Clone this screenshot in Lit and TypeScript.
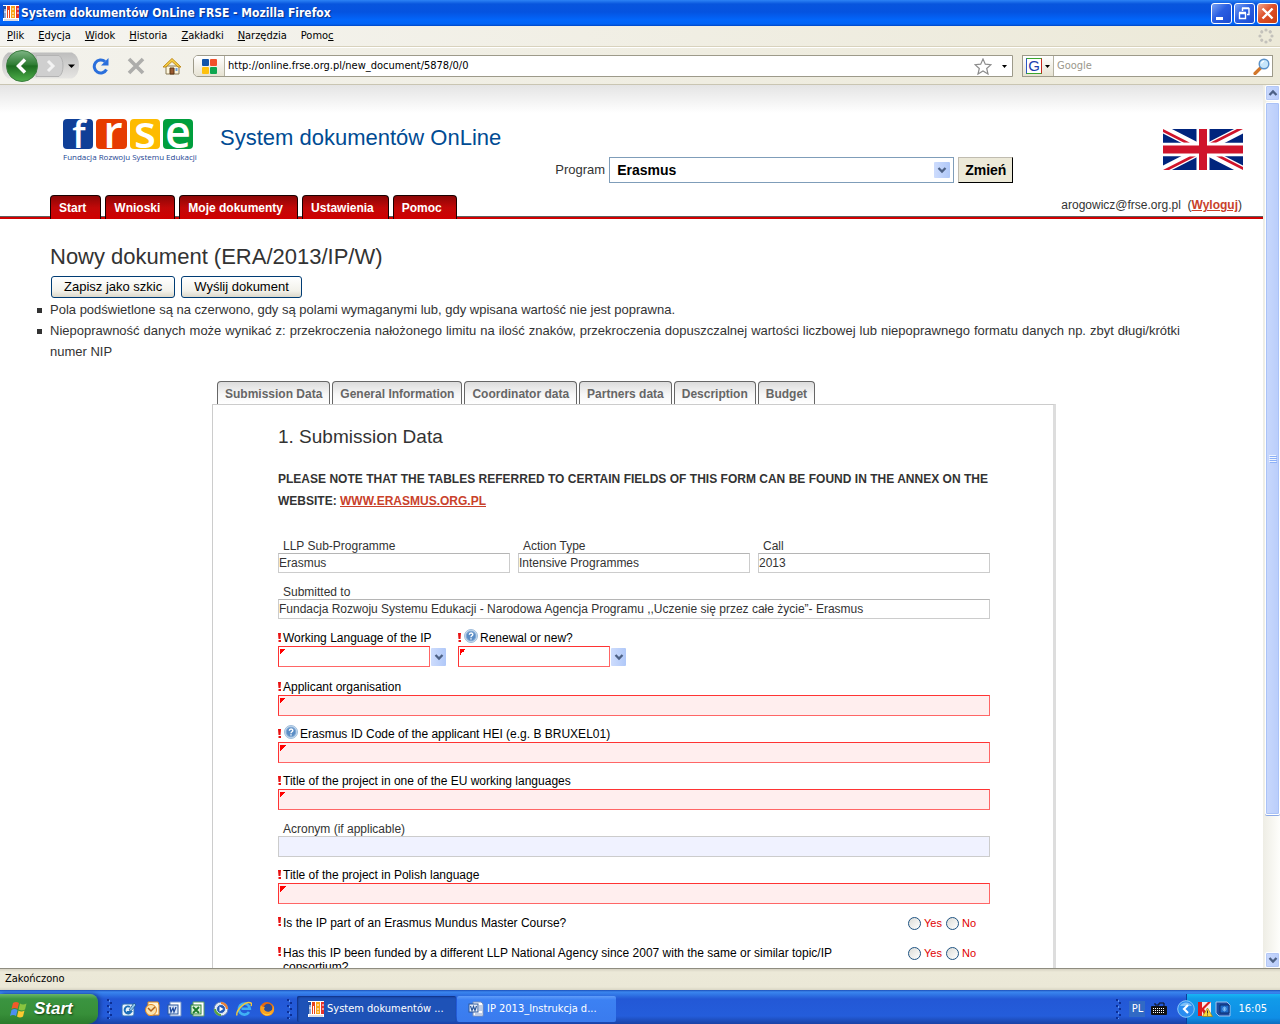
import { LitElement, html, svg, css, nothing } from "lit";
import { customElement, state } from "lit/decorators.js";
import { classMap } from "lit/directives/class-map.js";

interface Field {
  id: string;
  label: string;
  value?: string;
  kind: "readonly" | "required" | "optional";
  help?: boolean;
}

const menus: [string, string, string][] = [
  ["", "P", "lik"],
  ["", "E", "dycja"],
  ["", "W", "idok"],
  ["", "H", "istoria"],
  ["", "Z", "akładki"],
  ["", "N", "arzędzia"],
  ["Pomo", "c", ""],
];

const navItems = ["Start", "Wnioski", "Moje dokumenty", "Ustawienia", "Pomoc"];

const tabs = [
  "Submission Data",
  "General Information",
  "Coordinator data",
  "Partners data",
  "Description",
  "Budget",
];

const programmeFields: Field[] = [
  { id: "sub", label: "LLP Sub-Programme", value: "Erasmus", kind: "readonly" },
  { id: "action", label: "Action Type", value: "Intensive Programmes", kind: "readonly" },
  { id: "call", label: "Call", value: "2013", kind: "readonly" },
];

const submittedTo: Field = {
  id: "submitted",
  label: "Submitted to",
  value: "Fundacja Rozwoju Systemu Edukacji - Narodowa Agencja Programu ,,Uczenie się przez całe życie”- Erasmus",
  kind: "readonly",
};

const selects: Field[] = [
  { id: "lang", label: "Working Language of the IP", kind: "required" },
  { id: "renewal", label: "Renewal or new?", kind: "required", help: true },
];

const textFields: Field[] = [
  { id: "org", label: "Applicant organisation", kind: "required" },
  { id: "erasmus-id", label: "Erasmus ID Code of the applicant HEI (e.g. B BRUXEL01)", kind: "required", help: true },
  { id: "title-eu", label: "Title of the project in one of the EU working languages", kind: "required" },
  { id: "acronym", label: "Acronym (if applicable)", kind: "optional" },
  { id: "title-pl", label: "Title of the project in Polish language", kind: "required" },
];

const questions = [
  { id: "mundus", text: "Is the IP part of an Erasmus Mundus Master Course?" },
  {
    id: "funded",
    text: "Has this IP been funded by a different LLP National Agency since 2007 with the same or similar topic/IP consortium?",
  },
];

const chevron = (dir: "up" | "down") => html`<svg viewBox="0 0 14 14" width="14" height="14" aria-hidden="true">
  <path d=${dir === "down" ? "M3.5 5 7 8.5 10.500 5" : "M3.500 9 7 5.500 10.500 9"} fill="none" stroke="#4d6185" stroke-width="2.300" />
</svg>`;

const caret = html`<svg viewBox="0 0 5 3" width="5" height="3" aria-hidden="true"><path d="M0 0h5L2.500 3z" fill="#000" /></svg>`;

const grip = html`<svg viewBox="0 0 6 20" width="6" height="20" aria-hidden="true">
  <path d="M1 0v20" stroke="#0c2f95" stroke-width="2" stroke-dasharray="2 4" />
  <path d="M4 3v17" stroke="#0c2f95" stroke-width="2" stroke-dasharray="2 4" />
  <path d="M2.500 1v19" stroke="#5c93f2" stroke-width="1" stroke-dasharray="2 4" />
</svg>`;

const frseMini = html`<svg viewBox="0 0 16 16" width="16" height="16" aria-hidden="true">
  <rect width="16" height="16" fill="#fff" />
  <path d="M0 1h3v12H0z" fill="#1d4fa8" /><path d="M4 1h3v12H4z" fill="#e8431b" />
  <path d="M8 1h4v12H8z" fill="#f9a516" /><path d="M13 1h3v12h-3z" fill="#e7322a" />
  <path d="M2 4v9M1 7h2M5.500 5v8M9 4h2M9 8h2M9 11h2M14 4h2M14 8h2" stroke="#fff" stroke-width="1" />
  <path d="M1 15h14" stroke="#b9b9c9" stroke-width="1" />
</svg>`;

const wordDoc = html`<svg viewBox="0 0 16 16" width="16" height="16" aria-hidden="true">
  <path d="M5 1h8l2 2v12H5z" fill="#fff" stroke="#7790bd" />
  <path d="M11 5h3M11 7h3M11 9h3M7 13h7" stroke="#7d9ad0" />
  <rect x="1" y="3" width="9" height="8" fill="#e8effb" stroke="#2b579a" />
  <path d="m2.500 5 1.500 4.500L5.500 5.500 7 9.500 8.500 5" fill="none" stroke="#2b579a" stroke-width="1.200" />
</svg>`;

const quickLaunch = [
  svg`<rect x="1" y="3" width="12" height="12" rx="2" fill="#e9f3fb" stroke="#2d6fb5"/><path d="M9 6a3.500 3.500 0 1 0 1 5H6" fill="none" stroke="#1e6fb8" stroke-width="2"/><path d="m8 9 5-7 2 2-5 6z" fill="#8cc7ee" stroke="#134a86" stroke-width=".7"/>`,
  svg`<path d="M4 1h10l1 3v10H4z" fill="#fff4d8" stroke="#e08b1c"/><circle cx="7" cy="9" r="5.500" fill="#fbe3b0" stroke="#e1861b"/><path d="m4 7 3 3 4-4" fill="none" stroke="#b0621a" stroke-width="1.500"/>`,
  svg`<path d="M3 1h11v14H3z" fill="#fff" stroke="#6d8fca"/><rect x="1" y="4" width="10" height="9" fill="#d9e6fa" stroke="#2b579a"/><path d="m3 6 1 5 2-4 1 4 2-5" fill="none" stroke="#1f4a9c" stroke-width="1.300"/>`,
  svg`<path d="M3 1h11v14H3z" fill="#fff" stroke="#5c9c63"/><rect x="1" y="4" width="10" height="9" fill="#d8efd6" stroke="#2f8236"/><path d="m3 6 6 6M9 6l-6 6" stroke="#1d7a2a" stroke-width="1.800"/>`,
  svg`<circle cx="8" cy="8" r="7" fill="#e9edf5" stroke="#5b7bb4"/><path d="M8 1a7 7 0 0 1 7 7H8z" fill="#ee8134"/><path d="M1 8a7 7 0 0 0 7 7V8z" fill="#5aa63c"/><circle cx="8" cy="8" r="4.500" fill="#2359b5" stroke="#dfe8f7"/><path d="M6.500 5.500v5L10.500 8z" fill="#fff"/>`,
  svg`<path d="M13 11a5.500 5.500 0 1 1 .8-3.200H5.500" fill="none" stroke="#3fb0f5" stroke-width="2.600"/><path d="M1 14.500C-.500 10 9-.500 15 2c1 .8.500 2 0 3" fill="none" stroke="#f3c93b" stroke-width="1.400"/>`,
  svg`<circle cx="8" cy="8" r="7" fill="#e66a10"/><circle cx="9" cy="7" r="4.300" fill="#2b4d9b"/><path d="M2 4c1 2 3 2 4 2l-1 2c1 3 5 4 8 1 1-2 1-4 0-6 3 3 3 8-1 11-4 2-9 0-10.500-4C1 8 1 6 2 4z" fill="#f9a11f"/><path d="M3 11c3 3 7 3 10 0-2 4-8 5-10 0z" fill="#fbd04b"/>`,
];

@customElement("app-root")
export class AppRoot extends LitElement {
  @state() private answers: Record<string, string> = {};

  static styles = css`
    :host {
      display: flex;
      flex-direction: column;
      height: 100vh;
      overflow: hidden;
      background: #fff;
      color: #333;
      font: 12px/14px "Liberation Sans", Arial, sans-serif;
    }
    * { box-sizing: border-box; }
    svg { display: block; flex: none; }
    button, input, select { font: inherit; color: inherit; margin: 0; border-radius: 0; outline: none; }
    button { padding: 0; border: 0; background: none; }
    h1, h2, p, ul { margin: 0; padding: 0; font-weight: normal; }
    ul { list-style: none; }

    .ui { font: 11px/14px "DejaVu Sans Condensed", Tahoma, sans-serif; color: #000; }

    /* window frame */
    .titlebar {
      flex: none;
      height: 26px;
      display: flex;
      align-items: center;
      gap: 2px;
      padding: 0 2px 0 3px;
      background: linear-gradient(#2d83f5 0, #0855dd 4px, #0553e0 12px, #0266fb 20px, #0264f5 24px, #0146c4 26px);
    }
    .titlebar-text {
      flex: 1;
      font: bold 12px/16px "DejaVu Sans Condensed", "Trebuchet MS", sans-serif;
      color: #fff;
      text-shadow: 1px 1px 1px #0a2f86;
    }
    .winbtn {
      width: 21px;
      height: 21px;
      border: 1px solid #fff;
      border-radius: 3px;
      background: linear-gradient(135deg, #7aa2f3, #2a5fe2 45%, #1c4bd0);
    }
    .winbtn.close { background: linear-gradient(135deg, #f0a58d, #de5029 45%, #c83d12); }
    .winbtn svg { margin: auto; }

    .menubar {
      flex: none;
      height: 22px;
      display: flex;
      align-items: center;
      justify-content: space-between;
      padding: 0 6px 2px 7px;
      background: linear-gradient(90deg, #f5f4f0, #ece9d8);
      border-bottom: 1px solid #fff;
      box-shadow: inset 0 -1px #d8d2bd;
    }
    .menus { display: flex; gap: 14px; }

    .toolbar {
      flex: none;
      height: 37px;
      display: flex;
      align-items: center;
      padding: 0 7px 0 2px;
      background: linear-gradient(90deg, #f3f2ec, #ece9d8);
      border-bottom: 1px solid #c9c5b2;
    }
    .history { margin-right: 12px; }
    .toolbtn { margin-right: 17px; }
    .urlbar, .search {
      height: 22px;
      display: flex;
      align-items: center;
      background: #fff;
      border: 1px solid #9d9a8a;
    }
    .urlbar { flex: 1; border-radius: 5px 0 0 5px; margin: 0 9px 0 -6px; padding-right: 5px; }
    .identity {
      width: 31px;
      height: 20px;
      display: flex;
      align-items: center;
      justify-content: center;
      background: linear-gradient(#fff, #e6e2d2);
      border-right: 1px solid #b5b2a2;
      border-radius: 4px 0 0 4px;
    }
    .url-input { flex: 1; min-width: 0; border: 0; padding: 0 3px; background: none; }
    .url-input::placeholder { color: #9a978c; opacity: 1; }
    .star { margin-right: 10px; }
    .search { width: 251px; padding-right: 2px; }
    .engine {
      width: 31px;
      height: 20px;
      display: flex;
      align-items: center;
      gap: 3px;
      padding-left: 3px;
      background: linear-gradient(#fff, #e6e2d2);
      border-right: 1px solid #b5b2a2;
    }
    .engine-mark {
      width: 16px;
      height: 16px;
      border: 1px solid #2a56c6;
      border-top-color: #3aa52f;
      border-bottom-color: #3aa52f;
      border-right-color: #c5281c;
      background: #fff;
      font: 15px/14px "Liberation Sans", Arial, sans-serif;
      color: #1b3fae;
      text-align: center;
    }

    /* viewport and scrollbar */
    .viewport { flex: 1; min-height: 0; display: flex; }
    .page {
      flex: 1;
      min-width: 0;
      overflow: hidden;
      background: linear-gradient(#e4e4e4, #fff 28px);
    }
    .scrollbar {
      flex: none;
      width: 17px;
      display: flex;
      flex-direction: column;
      gap: 1px;
      padding: 0 0 0 1px;
      background: linear-gradient(90deg, #eeede5, #fefefb);
    }
    .scrollbtn, .thumb {
      width: 15px;
      margin-left: 1px;
      border: 1px solid #fff;
      border-radius: 2px;
      background: linear-gradient(90deg, #c9d8fc, #b9cdfb);
      box-shadow: inset 0 0 0 1px #b4c8f6;
      display: flex;
      align-items: center;
      justify-content: center;
    }
    .scrollbtn { height: 16px; }
    .track { flex: 1; }
    .thumb { height: 84%; box-shadow: inset 0 0 0 1px #aac2f7, 0 1px #8ca9e6; }

    /* page header */
    .header { display: flex; height: 98px; padding: 34px 20px 0 63px; }
    .brand { width: 131px; color: #1d4592; }
    .brand-caption { font: 8px/14px "Open Sans", sans-serif; white-space: nowrap; }
    .site-title { margin-left: 26px; font-size: 22px; line-height: 38px; color: #004b93; white-space: nowrap; }
    .program { align-self: flex-end; display: flex; align-items: center; margin-left: 54px; }
    .program-label { font-size: 13px; margin-right: 4px; }
    .select-wrap { position: relative; display: flex; align-items: center; }
    .program-select {
      width: 345px;
      height: 26px;
      padding: 0 24px 0 7px;
      appearance: none;
      border: 1px solid #7f9db9;
      background: #fff;
      color: #000;
      font-size: 14px;
      font-weight: bold;
    }
    .drop {
      width: 16px;
      height: 18px;
      display: flex;
      align-items: center;
      justify-content: center;
      border-radius: 1px;
      background: linear-gradient(90deg, #cddcfd, #b0c8f8);
      pointer-events: none;
    }
    .select-wrap .drop { position: absolute; right: 4px; height: 16px; }
    .change {
      height: 26px;
      margin-left: 4px;
      padding: 0 6px;
      border: 1px solid #000;
      border-top-color: #c0bcb0;
      border-left-color: #c0bcb0;
      background: #ece9d8;
      color: #000;
      font-size: 14px;
      font-weight: bold;
    }
    .flag { margin: 10px 0 0 auto; }

    .navrow {
      display: flex;
      justify-content: space-between;
      height: 24px;
      margin-top: 12px;
      padding: 0 21px 0 50px;
      background: linear-gradient(to top, #d00000 2px, #5f5f5f 2px, #5f5f5f 3px, transparent 3px);
    }
    .nav { display: flex; gap: 4px; }
    .nav-link {
      padding: 0 14px 0 8px;
      border: 1px solid #1a0000;
      border-bottom: 0;
      border-radius: 4px 4px 0 0;
      background: linear-gradient(#8c0606, #c20808 12px, #d00000);
      color: #fff;
      font-weight: bold;
      line-height: 24px;
      text-decoration: none;
    }
    .user { line-height: 20px; }
    .link { color: #c9412b; font-weight: bold; text-decoration: underline; }

    /* document intro */
    .intro { padding: 23px 83px 0 50px; }
    .doc-title { font-size: 22px; line-height: 30px; }
    .actions { display: flex; gap: 6px; padding: 4px 0 0 1px; }
    .action {
      height: 22px;
      padding: 0 12px;
      border: 1px solid #003c74;
      border-radius: 3px;
      background: linear-gradient(#fff, #f2f1ea 70%, #dcd8ca);
      color: #000;
      font-size: 13px;
    }
    .hints { margin: 1px 0 0 -13px; font-size: 13px; line-height: 21px; }
    .hint { display: grid; grid-template-columns: 13px 1fr; text-align: justify; }
    .hint::before { content: ""; width: 5px; height: 5px; margin-top: 9px; background: #333; }

    /* form */
    .form { padding: 19px 207px 0 212px; }
    .tabs { display: flex; gap: 2px; padding-left: 5px; }
    .tab {
      height: 23px;
      padding: 1px 7px 0 7px;
      border: 1px solid #666;
      border-bottom: 0;
      border-radius: 4px 4px 0 0;
      background: linear-gradient(#dcdcdc, #f6f6f6 12px, #fff);
      color: #666;
      font-weight: bold;
      white-space: nowrap;
    }
    .panel {
      display: flex;
      flex-direction: column;
      gap: 12px;
      padding: 20px 63px 40px 65px;
      border: 1px solid #ccc;
      border-right: 3px solid #ddd;
    }
    .panel-title { font-size: 19px; line-height: 24px; }
    .notice {
      margin: 7px 0 15px;
      padding-right: 2px;
      font-weight: bold;
      line-height: 22px;
      text-align: justify;
      text-transform: uppercase;
    }
    .columns { display: grid; grid-template-columns: repeat(3, 1fr); gap: 8px; }
    .picks { display: flex; gap: 12px; padding: 1px 0 2px; }
    .pick { width: 168px; }
    .label { display: flex; height: 14px; padding-left: 5px; white-space: nowrap; }
    .label.required { padding-left: 0; color: #000; line-height: 12px; }
    .bang { flex: none; width: 5px; }
    .help { margin: -3px 2px 0 1px; }
    .input {
      display: block;
      width: 100%;
      height: 21px;
      padding: 0;
      border: 1px solid #ccc;
      background: #fff;
    }
    .input.readonly { height: 20px; border-top-color: #b5b5b5; }
    .input.optional { background: #f0f2ff; }
    .input.required {
      border-color: #ff3333 #ff6666 #ff6666 #ff3333;
      background: linear-gradient(135deg, #f00 50%, transparent 50%) 1px 2px / 6px 6px no-repeat #ffeeee;
    }
    .pick-row { display: flex; align-items: center; gap: 1px; }
    .pick-row .input { flex: 1; width: auto; min-width: 0; appearance: none; background-color: #fff; }
    .pick-row .drop { width: 15px; }

    .question { display: flex; justify-content: space-between; min-height: 18px; padding-right: 14px; color: #000; }
    .question-text { display: flex; max-width: 580px; }
    .answers { display: flex; gap: 4px; height: 14px; align-items: center; font-size: 11px; color: #e00000; }
    .answer { display: flex; align-items: center; gap: 3px; }
    .radio {
      appearance: none;
      width: 13px;
      height: 13px;
      border: 1px solid #1d5281;
      border-radius: 50%;
      background: linear-gradient(135deg, #dcdcd7, #fff);
    }
    .radio:checked { background: radial-gradient(#21a121 2px, #f2f2f0 3px); }

    /* status bar and taskbar */
    .status {
      flex: none;
      height: 22px;
      padding: 3px 5px;
      border-top: 1px solid #8f8d80;
      background: linear-gradient(#d6d2c2, #ece9d8 3px, #ebe8d7 18px, #d9d6c5);
    }
    .taskbar {
      flex: none;
      height: 34px;
      display: flex;
      align-items: center;
      padding-top: 4px;
      background: linear-gradient(#1c4fb8 0, #3a86ee 2px, #2f73e4 5px, #2358d6 9px, #245ddb 26px, #1941a5 34px);
      color: #fff;
    }
    .start {
      width: 98px;
      height: 30px;
      display: flex;
      align-items: center;
      gap: 5px;
      margin-right: 9px;
      padding-left: 10px;
      border-radius: 0 8px 10px 0;
      background: linear-gradient(#69b566, #3b9440 5px, #378f39 20px, #2a7a2c);
      box-shadow: 2px 0 4px #14398f;
      color: #fff;
      font: italic bold 17px/20px "Liberation Sans", "Trebuchet MS", sans-serif;
      text-shadow: 1px 1px 2px #123d12;
    }
    .quick { display: flex; gap: 7px; margin: 0 12px 0 8px; }
    .tasks { flex: 1; display: flex; gap: 1px; margin-left: 4px; }
    .task {
      width: 159px;
      height: 26px;
      display: flex;
      align-items: center;
      gap: 3px;
      padding: 0 11px;
      border-radius: 2px;
      background: linear-gradient(#5f9cf8, #3c81f3 4px, #3a7bee);
      color: #fff;
      white-space: nowrap;
    }
    .task.active { background: #1e52b7; box-shadow: inset 1px 1px 2px #0f2f80; }
    .lang { width: 16px; margin: 0 6px 0 7px; padding: 1px 0; background: #316ac5; text-align: center; }
    .tray {
      align-self: stretch;
      display: flex;
      align-items: center;
      gap: 2px;
      margin-left: 19px;
      padding-right: 13px;
      border-left: 1px solid #0b3f9c;
      background: linear-gradient(#18b4f4 0, #119be9 5px, #0f8ee6 24px, #0c6cbf);
    }
    .expand { margin-left: -10px; }
    .clock { margin-left: 5px; }
  `;

  private renderLabel(f: Field) {
    const required = f.kind === "required";
    return html`<label class=${classMap({ label: true, required })} for=${f.id}>
      ${required ? this.renderBang() : nothing}${f.help ? this.renderHelp() : nothing}<span>${f.label}</span>
    </label>`;
  }

  private renderBang() {
    return html`<svg class="bang" viewBox="0 0 5 14" width="5" height="14" aria-hidden="true">
      <path d="M0 1h3l-.5 6H.5zM.5 8h2.500v2H.5z" fill="#e81010" />
    </svg>`;
  }

  private renderHelp() {
    return html`<svg class="help" viewBox="0 0 14 14" width="14" height="14" aria-hidden="true">
      <circle cx="7" cy="7" r="6.500" fill="#c9dcef" stroke="#9fbddb" />
      <circle cx="7" cy="7" r="4.800" fill="#5b8dc5" stroke="#7fa8d4" />
      <path d="M5.300 5.800C5.300 3.500 8.800 3.500 8.800 5.500 8.800 6.800 7 6.700 7 8.200M7 9.200v1.300" fill="none" stroke="#fff" stroke-width="1.400" />
    </svg>`;
  }

  private renderField(f: Field) {
    return html`<div class="field">
      ${this.renderLabel(f)}
      <input
        class=${classMap({ input: true, [f.kind]: true })}
        id=${f.id}
        type="text"
        .value=${f.value ?? ""}
        ?readonly=${f.kind === "readonly"}
      />
    </div>`;
  }

  private renderPick(f: Field) {
    return html`<div class="pick">
      ${this.renderLabel(f)}
      <div class="pick-row">
        <select class="input required" id=${f.id}><option></option></select>
        <span class="drop">${chevron("down")}</span>
      </div>
    </div>`;
  }

  private renderQuestion(q: { id: string; text: string }) {
    return html`<div class="question" role="radiogroup" aria-labelledby=${q.id}>
      <div class="question-text">${this.renderBang()}<span id=${q.id}>${q.text}</span></div>
      <div class="answers">
        ${["Yes", "No"].map(
          (a) => html`<label class="answer">
            <input
              class="radio"
              type="radio"
              name=${q.id}
              .checked=${this.answers[q.id] === a}
              @change=${() => (this.answers = { ...this.answers, [q.id]: a })}
            />${a}
          </label>`
        )}
      </div>
    </div>`;
  }

  private renderWindowTop() {
    return html`
      <div class="titlebar">
        ${frseMini}
        <span class="titlebar-text">System dokumentów OnLine FRSE - Mozilla Firefox</span>
        <button class="winbtn" aria-label="Minimalizuj">
          <svg viewBox="0 0 19 19" width="19" height="19"><path d="M4 13h7v3H4z" fill="#fff" /></svg>
        </button>
        <button class="winbtn" aria-label="Przywróć">
          <svg viewBox="0 0 19 19" width="19" height="19">
            <path d="M4.500 9.500h6v5h-6zM4 8.500h7M7.500 7V4.500h6.500v6h-2M7 4h7" fill="none" stroke="#fff" stroke-width="1.400" />
          </svg>
        </button>
        <button class="winbtn close" aria-label="Zamknij">
          <svg viewBox="0 0 19 19" width="19" height="19"><path d="m4.500 4.500 10 10M14.500 4.500l-10 10" stroke="#fff" stroke-width="2.400" /></svg>
        </button>
      </div>
      <div class="menubar ui">
        <div class="menus">
          ${menus.map(([before, key, after]) => html`<button class="menu">${before}<u>${key}</u>${after}</button>`)}
        </div>
        <svg viewBox="0 0 16 16" width="16" height="16" aria-hidden="true">
          ${[0, 45, 90, 135, 180, 225, 270, 315].map(
            (a) => svg`<circle cx="8" cy="2" r="1.600" fill="#c3c1bb" transform="rotate(${a} 8 8)" />`
          )}
        </svg>
      </div>
      <div class="toolbar ui">
        <svg class="history" viewBox="0 0 78 34" width="78" height="34" role="img" aria-label="Wstecz i dalej">
          <defs>
            <linearGradient id="pill" x2="0" y2="1"><stop stop-color="#bdbdbd" /><stop offset="1" stop-color="#e6e5e2" /></linearGradient>
            <linearGradient id="green" x2="0" y2="1">
              <stop stop-color="#7fb585" /><stop offset=".45" stop-color="#2f7d34" /><stop offset=".5" stop-color="#1c6c20" /><stop offset="1" stop-color="#4fb04b" />
            </linearGradient>
          </defs>
          <path d="M6 3.500h64q7 3 7 13t-7 13H6q-6-4-6-13t6-13z" fill="url(#pill)" />
          <path d="M34 6.500h23q4 3 4 10.500t-4 10.500H34z" fill="#cfcfcf" stroke="#b3b3b3" />
          <path d="m46 12 5 5-5 5" fill="none" stroke="#f3f3f3" stroke-width="3" />
          <circle cx="20" cy="17" r="15.500" fill="url(#green)" stroke="#3b7d3f" />
          <path d="m23 10.500-6.500 6.500 6.500 6.500" fill="none" stroke="#fff" stroke-width="3.500" />
          <path d="M66 15.500h7l-3.500 3.500z" fill="#000" />
        </svg>
        <button class="toolbtn" aria-label="Odśwież">
          <svg viewBox="0 0 18 18" width="18" height="18">
            <path d="M14.500 12.500A6.500 6.500 0 1 1 13 4.500" fill="none" stroke="#2a6fdc" stroke-width="3" />
            <path d="M16.500 1v7.500H9z" fill="#2a6fdc" />
          </svg>
        </button>
        <button class="toolbtn" aria-label="Zatrzymaj">
          <svg viewBox="0 0 18 18" width="18" height="18"><path d="m2 2 14 14M16 2 2 16" stroke="#adadab" stroke-width="3.600" /></svg>
        </button>
        <button class="toolbtn" aria-label="Strona startowa">
          <svg viewBox="0 0 20 18" width="20" height="18">
            <path d="M4 9h13v8H4z" fill="#fdf6dd" stroke="#8a7a55" />
            <path d="M1 10 10 1.500 19 10h-3l-6-5.500L4 10z" fill="#f8d243" stroke="#c08a1c" />
            <path d="M8 11h4v6H8z" fill="#9a5a30" stroke="#5b3414" /><path d="M13.500 11h2v3h-2z" fill="#6d9edc" />
          </svg>
        </button>
        <div class="urlbar">
          <span class="identity">
            <svg viewBox="0 0 15 15" width="15" height="15" aria-hidden="true">
              <rect width="7" height="7" rx="1" fill="#0f52a8" /><rect x="8" width="7" height="7" rx="1" fill="#f1512b" />
              <rect y="8" width="7" height="7" rx="1" fill="#fdc00d" /><rect x="8" y="8" width="7" height="7" rx="1" fill="#0da650" />
            </svg>
          </span>
          <input class="url-input" aria-label="Adres" type="text" .value=${"http://online.frse.org.pl/new_document/5878/0/0"} />
          <svg class="star" viewBox="0 0 18 17" width="18" height="17" aria-hidden="true">
            <path d="m9 1 2.300 5.200 5.700.5-4.300 3.800 1.300 5.500-5-3-5 3 1.300-5.500L1 6.700l5.700-.5z" fill="#fff" stroke="#8c8c8c" stroke-width="1.200" />
          </svg>
          ${caret}
        </div>
        <div class="search">
          <span class="engine"><span class="engine-mark">G</span>${caret}</span>
          <input class="url-input" aria-label="Szukaj" type="text" placeholder="Google" />
          <svg viewBox="0 0 17 17" width="17" height="17" aria-hidden="true">
            <path d="m2 15.500 6-6" stroke="#d2772b" stroke-width="3.200" stroke-linecap="round" />
            <circle cx="11" cy="6" r="4.800" fill="#c6e5fa" stroke="#5a91c8" stroke-width="1.400" />
            <path d="M8.500 5.500q.5-2 2.500-2.300" fill="none" stroke="#fff" stroke-width="1.300" />
          </svg>
        </div>
      </div>
    `;
  }

  private renderHeader() {
    return html`
      <header class="header">
        <div class="brand">
          <svg viewBox="0 0 131 31" width="131" height="31" role="img" aria-label="frse">
            <rect width="30" height="30" rx="4" fill="#0f3f97" /><rect x="33" width="31" height="30" rx="4" fill="#e63c00" />
            <rect x="67" width="30" height="30" rx="4" fill="#fdbb00" /><rect x="100" width="30" height="30" rx="4" fill="#009e3d" />
            <g fill="#fff" font-family="Open Sans, sans-serif" font-weight="600" text-anchor="middle">
              <text x="16" y="29" font-size="37">f</text>
              <text x="50" y="29" font-size="45">r</text>
              <text x="82" y="29" font-size="45">s</text>
              <text x="115" y="29" font-size="45">e</text>
            </g>
          </svg>
          <div class="brand-caption">Fundacja Rozwoju Systemu Edukacji</div>
        </div>
        <div class="site-title">System dokumentów OnLine</div>
        <div class="program">
          <label class="program-label" for="program">Program</label>
          <span class="select-wrap">
            <select class="program-select" id="program"><option>Erasmus</option></select>
            <span class="drop">${chevron("down")}</span>
          </span>
          <button class="change">Zmień</button>
        </div>
        <svg class="flag" viewBox="0 0 80 40" width="80" height="41" preserveAspectRatio="none" role="img" aria-label="English">
          <rect width="80" height="40" fill="#00247d" />
          <path d="m0 0 80 40M80 0 0 40" stroke="#fff" stroke-width="8" />
          <path d="M0 0l27 13.500h-6L0 3zM80 0 53 13.500h-6L74 0zM80 40 53 26.500h6L80 37zM0 40l27-13.500h6L6 40z" fill="#cf142b" />
          <path d="M40 0v40M0 20h80" stroke="#fff" stroke-width="13" />
          <path d="M40 0v40M0 20h80" stroke="#cf142b" stroke-width="8" />
        </svg>
      </header>
      <div class="navrow">
        <nav class="nav">${navItems.map((n) => html`<a class="nav-link" href="#">${n}</a>`)}</nav>
        <div class="user">arogowicz@frse.org.pl &nbsp;(<a class="link" href="#">Wyloguj</a>)</div>
      </div>
    `;
  }

  private renderTaskbar() {
    return html`
      <div class="status ui">Zakończono</div>
      <div class="taskbar ui">
        <button class="start">
          <svg viewBox="0 0 19 18" width="19" height="18" aria-hidden="true">
            <path d="M3 3q3-2 6 0L7.500 9q-3-2-6 0z" fill="#f1592a" /><path d="M10 3.500q3 2 6.500 0L15 9.500q-3 2-6.500 0z" fill="#8ac43f" />
            <path d="M1.500 10q3-2 6 0L6 16q-3-2-6 0z" fill="#4c8ff0" /><path d="M8.500 10.500q3 2 6 0L13 16.500q-3 2-6 0z" fill="#fbc931" />
          </svg>
          Start
        </button>
        ${grip}
        <div class="quick">
          ${quickLaunch.map((g) => html`<svg viewBox="0 0 16 16" width="16" height="16" aria-hidden="true">${g}</svg>`)}
        </div>
        ${grip}
        <div class="tasks">
          <button class="task active">${frseMini}System dokumentów ...</button>
          <button class="task">${wordDoc}IP 2013_Instrukcja d...</button>
        </div>
        ${grip}
        <span class="lang">PL</span>
        <svg viewBox="0 0 16 14" width="16" height="14" aria-hidden="true">
          <path d="M4 1v2h4V1h5v3" fill="none" stroke="#111" />
          <rect y="4" width="16" height="9" rx="1" fill="#111" />
          <path d="M2 6.500h12M2 8.500h12M2 10.500h12" stroke="#fff" stroke-dasharray="1 1" />
        </svg>
        <div class="tray">
          <svg class="expand" viewBox="0 0 18 18" width="18" height="18" aria-hidden="true">
            <circle cx="9" cy="9" r="8.300" fill="#2a8df0" stroke="#8cc8fa" /><path d="M3 6a7 7 0 0 1 12 0z" fill="#7fc0f8" />
            <path d="M11 5 7 9l4 4" fill="none" stroke="#fff" stroke-width="2.200" />
          </svg>
          <svg viewBox="0 0 16 16" width="16" height="16" aria-hidden="true">
            <rect x="1" y="1" width="13" height="14" fill="#f7eded" />
            <path d="M1 1h4v6l6-6h3L7 8l5 7H8l-3-5v5H1z" fill="#dd1d20" />
            <path d="m10.500 7 5 8.500h-10z" fill="#fbd83b" stroke="#a07a10" stroke-width=".7" /><path d="M10.500 9.500v3M10.500 13.500v1" stroke="#333" />
          </svg>
          <svg viewBox="0 0 16 16" width="16" height="16" aria-hidden="true">
            <path d="M1 1h11l3 3v11H4l-3-3z" fill="#1d4aa0" stroke="#9fc4ee" /><path d="M5 4h9v8H5z" fill="#1f6bc9" stroke="#0c2f6f" />
            <path d="M9.500 5.500v5M7 8h5M8 6l3 4M11 6l-3 4" stroke="#8fd0ff" stroke-width=".7" />
          </svg>
          <span class="clock">16:05</span>
        </div>
      </div>
    `;
  }

  render() {
    return html`
      ${this.renderWindowTop()}
      <div class="viewport">
        <div class="page">
          ${this.renderHeader()}
          <main>
            <section class="intro">
              <h1 class="doc-title">Nowy dokument (ERA/2013/IP/W)</h1>
              <div class="actions">
                <button class="action">Zapisz jako szkic</button>
                <button class="action">Wyślij dokument</button>
              </div>
              <ul class="hints">
                <li class="hint">
                  Pola podświetlone są na czerwono, gdy są polami wymaganymi lub, gdy wpisana wartość nie jest poprawna.
                </li>
                <li class="hint">
                  Niepoprawność danych może wynikać z: przekroczenia nałożonego limitu na ilość znaków, przekroczenia
                  dopuszczalnej wartości liczbowej lub niepoprawnego formatu danych np. zbyt długi/krótki numer NIP
                </li>
              </ul>
            </section>
            <section class="form">
              <div class="tabs">${tabs.map((t) => html`<button class="tab">${t}</button>`)}</div>
              <div class="panel">
                <h2 class="panel-title">1. Submission Data</h2>
                <p class="notice">
                  Please note that the tables referred to certain fields of this form can be found in the annex on the
                  website: <a class="link" href="#">www.erasmus.org.pl</a>
                </p>
                <div class="columns">${programmeFields.map((f) => this.renderField(f))}</div>
                ${this.renderField(submittedTo)}
                <div class="picks">${selects.map((f) => this.renderPick(f))}</div>
                ${textFields.map((f) => this.renderField(f))} ${questions.map((q) => this.renderQuestion(q))}
              </div>
            </section>
          </main>
        </div>
        <div class="scrollbar" aria-hidden="true">
          <span class="scrollbtn">${chevron("up")}</span>
          <div class="track">
            <div class="thumb">
              <svg viewBox="0 0 8 8" width="8" height="8">
                <path d="M0 .5h7M0 2.500h7M0 4.500h7M0 6.500h7" stroke="#eef4fe" />
                <path d="M1 1.500h7M1 3.500h7M1 5.500h7M1 7.500h7" stroke="#8cb0f8" />
              </svg>
            </div>
          </div>
          <span class="scrollbtn">${chevron("down")}</span>
        </div>
      </div>
      ${this.renderTaskbar()}
    `;
  }
}
